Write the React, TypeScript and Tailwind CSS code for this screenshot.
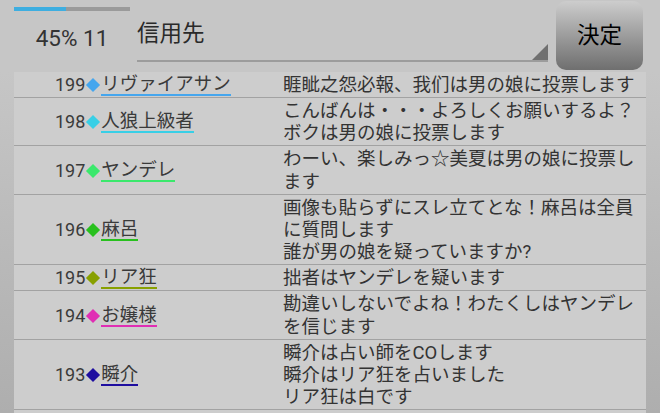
import React from "react";

type Row = { no: number; name: string; color: string; lines: string[] };

const rows: Row[] = [
  { no: 199, name: "リヴァイアサン", color: "#45a6ee", lines: ["睚眦之怨必報、我们は男の娘に投票します"] },
  { no: 198, name: "人狼上級者", color: "#38cfe6", lines: ["こんばんは・・・よろしくお願いするよ？", "ボクは男の娘に投票します"] },
  { no: 197, name: "ヤンデレ", color: "#3be86c", lines: ["わーい、楽しみっ☆美夏は男の娘に投票し", "ます"] },
  { no: 196, name: "麻呂", color: "#28c01e", lines: ["画像も貼らずにスレ立てとな！麻呂は全員", "に質問します", "誰が男の娘を疑っていますか?"] },
  { no: 195, name: "リア狂", color: "#88a000", lines: ["拙者はヤンデレを疑います"] },
  { no: 194, name: "お嬢様", color: "#e02eb4", lines: ["勘違いしないでよね！わたくしはヤンデレ", "を信じます"] },
  { no: 193, name: "瞬介", color: "#1e0ea0", lines: ["瞬介は占い師をCOします", "瞬介はリア狂を占いました", "リア狂は白です"] },
];

export default function App() {
  return (
    <div
      className="w-[660px] h-[413px] overflow-hidden bg-[#c6c6c6] flex flex-col"
      style={{ fontFamily: '"Roboto", "Noto Sans CJK JP", sans-serif' }}
    >
      {/* header */}
      <div className="h-[72px] flex shrink-0">
        <div className="w-[130px] pl-[14px] pt-[7px] flex flex-col items-center">
          <div className="w-[116px] h-[4px] bg-[#9a9a9a] flex">
            <div className="w-[52px] h-full bg-[#3eaee0]" />
          </div>
          <div className="mt-[14px] text-[22.5px] leading-[26px] text-[#333]">45% 11</div>
        </div>
        <div className="ml-[7px] w-[411px] h-[62px] relative border-b-2 border-[#9c9c9c]">
          <div className="pt-[19px] text-[22.5px] leading-[28px] text-[#2a2a2a]">信用先</div>
          <div
            className="absolute right-0 bottom-0 w-[16px] h-[16px] bg-[#707070]"
            style={{ clipPath: "polygon(100% 0, 100% 100%, 0 100%)" }}
          />
        </div>
        <div className="ml-[8px] mt-[1px] w-[87px] h-[69px] rounded-[10px] bg-gradient-to-b from-[#cdcdcd] to-[#6f6f6f] flex items-center justify-center">
          <span className="text-[22.5px] text-black leading-none">決定</span>
        </div>
      </div>
      {/* list */}
      <div className="flex-1 flex bg-gradient-to-b from-[#c6c6c6] to-[#aeaeae]">
        <div className="ml-[14px] w-[632px] bg-[#cdcdcd] flex flex-col">
          {rows.map((r) => (
            <div key={r.no} className="flex border-b border-[#a2a2a2] pt-[2px] pb-[1px]">
              <div className="w-[269px] pl-[41px] flex items-center text-[#3a3a3a] text-[18px]">
                <span className="leading-[22px]">{r.no}</span>
                <span
                  className="w-[10px] h-[10px] rotate-45 mx-[3px]"
                  style={{ backgroundColor: r.color }}
                />
                <span
                  className="leading-[20px] border-b-2 text-[18.5px]"
                  style={{ borderColor: r.color }}
                >
                  {r.name}
                </span>
              </div>
              <div className="flex-1 text-[18.5px] leading-[22.15px] text-[#333] whitespace-nowrap">
                {r.lines.map((l, i) => (
                  <div key={i}>{l}</div>
                ))}
              </div>
            </div>
          ))}
        </div>
      </div>
    </div>
  );
}
